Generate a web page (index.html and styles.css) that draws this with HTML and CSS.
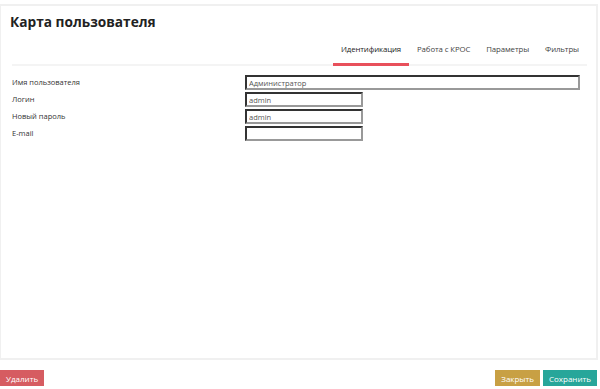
FILE: index.html
```html
<!DOCTYPE html>
<html lang="ru">
<head>
    <meta charset="UTF-8">
    <title>Карта пользователя</title>
    <link rel="stylesheet" href="styles.css">
</head>
<body>

    <div class="card">
        <h1>Карта пользователя</h1>

        <div class="tabs">
            <span class="tab active">Идентификация</span>
            <span class="tab">Работа с КРОС</span>
            <span class="tab">Параметры</span>
            <span class="tab">Фильтры</span>
        </div>

        <div class="form">
            <label>Имя пользователя</label>
            <input class="wide" type="text" value="Администратор">
            <label>Логин</label>
            <input type="text" value="admin">
            <label>Новый пароль</label>
            <input type="text" value="admin">
            <label>E-mail</label>
            <input type="text" value="">
        </div>
    </div>

    <div class="actions">
        <button class="btn delete">Удалить</button>
        <div class="right">
            <button class="btn close">Закрыть</button>
            <button class="btn save">Сохранить</button>
        </div>
    </div>

</body>
</html>
```

FILE: styles.css
```css
body {
    margin: 0;
    font-family: 'Open Sans', sans-serif;
    color: #333;
    background: #fff;
}

.card {
    margin: 4px 2px 0 0;
    height: 352px;
    border: 2px solid #f0f0f0;
    border-left-width: 1px;
}

h1 {
    font-size: 13.7px;
    font-weight: bold;
    margin: 0;
    padding: 7px 0 0 9px;
    color: #222;
    line-height: 18px;
}

.tabs {
    display: flex;
    justify-content: flex-end;
    margin: 7px 9px 0 11px;
    border-bottom: 2px solid #f4f4f4;
}

.tab {
    font-size: 7.8px;
    letter-spacing: -0.1px;
    color: #444;
    padding: 5px 8px 8px;
    line-height: 12px;
}

.tab.active {
    color: #222;
    border-bottom: 3px solid #e8505b;
    margin-bottom: -2px;
}

.form {
    display: grid;
    grid-template-columns: 233px 1fr;
    row-gap: 2px;
    align-items: center;
    padding: 9px 0 0 11px;
}

label {
    font-family: 'Open Sans', sans-serif;
    font-size: 7.5px;
    color: #333;
    line-height: 15px;
}

input {
    font-family: 'Open Sans', sans-serif;
    font-size: 7.5px;
    color: #555;
    width: 118px;
    height: 15px;
    box-sizing: border-box;
    padding: 0 2px;
    border: 2px solid #333;
    border-right-color: #999;
    border-bottom-color: #999;
    outline: none;
}

input.wide {
    width: 335px;
}

.actions {
    display: flex;
    justify-content: space-between;
    margin-top: 10px;
}

.right {
    display: flex;
    gap: 3px;
    margin-right: 3px;
}

.btn {
    font-family: 'Open Sans', sans-serif;
    font-size: 8px;
    color: #fff;
    border: none;
    height: 16px;
    padding: 0 6px;
    cursor: pointer;
}

.delete {
    background: #d65c61;
}

.close {
    background: #c8a044;
}

.save {
    background: #27a69a;
}
```
